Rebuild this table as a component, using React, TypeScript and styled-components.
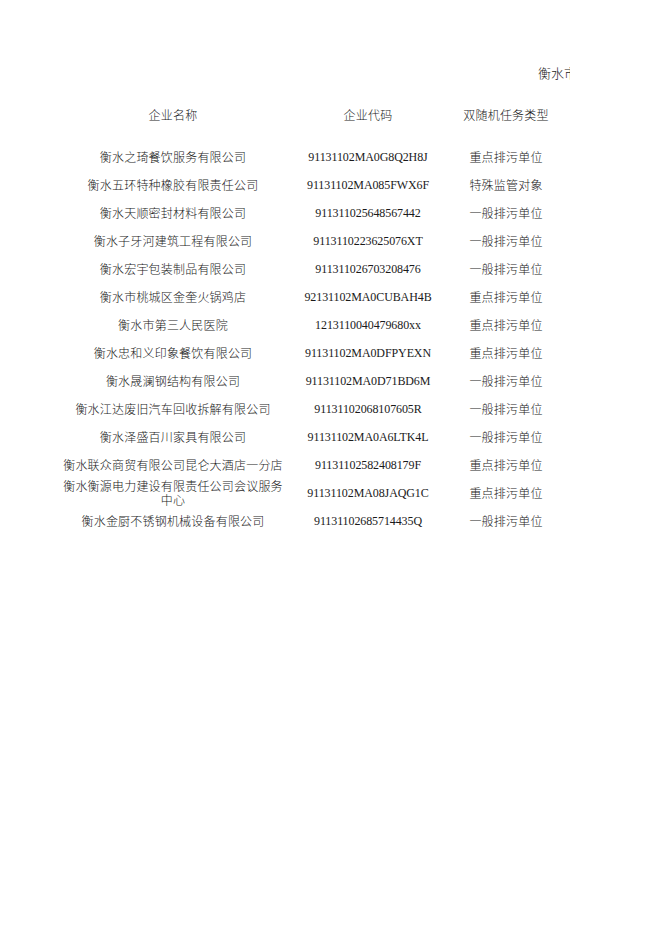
import React from 'react';
import styled, { createGlobalStyle } from 'styled-components';

const GlobalStyle = createGlobalStyle`
  html, body {
    margin: 0;
    padding: 0;
    background: #ffffff;
  }
  body {
    font-family: "Liberation Serif", "Noto Sans CJK SC", serif;
    color: #1a1a1a;
  }
`;

type Row = { name: string; code: string; kind: string };

const rows: Row[] = [
  { name: '衡水之琦餐饮服务有限公司', code: '91131102MA0G8Q2H8J', kind: '重点排污单位' },
  { name: '衡水五环特种橡胶有限责任公司', code: '91131102MA085FWX6F', kind: '特殊监管对象' },
  { name: '衡水天顺密封材料有限公司', code: '911311025648567442', kind: '一般排污单位' },
  { name: '衡水子牙河建筑工程有限公司', code: '9113110223625076XT', kind: '一般排污单位' },
  { name: '衡水宏宇包装制品有限公司', code: '911311026703208476', kind: '一般排污单位' },
  { name: '衡水市桃城区金奎火锅鸡店', code: '92131102MA0CUBAH4B', kind: '重点排污单位' },
  { name: '衡水市第三人民医院', code: '1213110040479680xx', kind: '重点排污单位' },
  { name: '衡水忠和义印象餐饮有限公司', code: '91131102MA0DFPYEXN', kind: '重点排污单位' },
  { name: '衡水晟澜钢结构有限公司', code: '91131102MA0D71BD6M', kind: '一般排污单位' },
  { name: '衡水江达废旧汽车回收拆解有限公司', code: '91131102068107605R', kind: '一般排污单位' },
  { name: '衡水泽盛百川家具有限公司', code: '91131102MA0A6LTK4L', kind: '一般排污单位' },
  { name: '衡水联众商贸有限公司昆仑大酒店一分店', code: '91131102582408179F', kind: '重点排污单位' },
  { name: '衡水衡源电力建设有限责任公司会议服务中心', code: '91131102MA08JAQG1C', kind: '重点排污单位' },
  { name: '衡水金厨不锈钢机械设备有限公司', code: '91131102685714435Q', kind: '一般排污单位' },
];

const Page = styled.div`
  width: 662px;
  min-height: 936px;
  padding-top: 63px;
  box-sizing: border-box;
`;

const TitleBar = styled.div`
  display: flex;
  justify-content: flex-end;
  padding-right: 92px;
  height: 20px;
`;

/* the sheet title is cut off by its cell, as in the source */
const Title = styled.div`
  width: 32px;
  overflow: hidden;
  white-space: nowrap;
  font-family: "Noto Sans CJK SC", sans-serif;
  font-size: 13px;
  line-height: 20px;
  font-weight: 300;
`;

const Table = styled.div`
  display: grid;
  grid-template-columns: 226px 164px 112px;
  margin: 18px 0 0 60px;
`;

const Cell = styled.div<{ $mono?: boolean; $head?: boolean }>`
  display: flex;
  align-items: center;
  justify-content: center;
  text-align: center;
  height: 28px;
  margin-bottom: ${(p) => (p.$head ? '14px' : '0')};
  font-family: ${(p) =>
    p.$mono ? '"Liberation Serif", serif' : '"Noto Sans CJK SC", sans-serif'};
  font-size: 12px;
  font-weight: ${(p) => (p.$mono ? 400 : 300)};
  line-height: 14px;
  letter-spacing: ${(p) => (p.$mono ? '-0.1px' : '0.2px')};
`;

const App: React.FC = () => {
  return (
    <Page>
      <GlobalStyle />
      <TitleBar>
        <Title>衡水市生态环境局</Title>
      </TitleBar>
      <Table>
        <Cell $head>企业名称</Cell>
        <Cell $head>企业代码</Cell>
        <Cell $head>双随机任务类型</Cell>
        {rows.map((r) => (
          <React.Fragment key={r.code}>
            <Cell>{r.name}</Cell>
            <Cell $mono>{r.code}</Cell>
            <Cell>{r.kind}</Cell>
          </React.Fragment>
        ))}
      </Table>
    </Page>
  );
};

export default App;
